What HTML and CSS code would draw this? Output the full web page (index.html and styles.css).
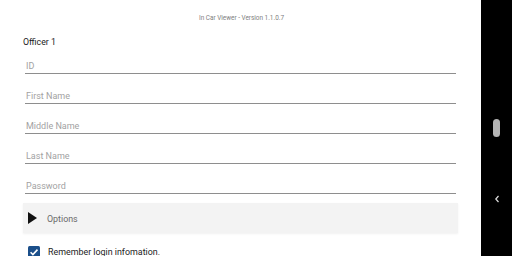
FILE: index.html
```html
<!DOCTYPE html>
<html>
<head>
<meta charset="utf-8">
<link rel="stylesheet" href="styles.css">
</head>
<body>
<div class="screen">
  <main class="app">
    <div class="version">In Car Viewer - Version 1.1.0.7</div>
    <div class="title">Officer 1</div>
    <div class="fields">
      <div class="field"><span class="label">ID</span></div>
      <div class="field"><span class="label">First Name</span></div>
      <div class="field"><span class="label">Middle Name</span></div>
      <div class="field"><span class="label">Last Name</span></div>
      <div class="field"><span class="label">Password</span></div>
    </div>
    <div class="options">
      <span class="tri"></span>
      <span class="options-label">Options</span>
    </div>
    <div class="remember">
      <span class="check">
        <svg width="12" height="12" viewBox="0 0 12 12"><path d="M2.6 6.2 L4.9 8.5 L9.5 3.6" fill="none" stroke="#fff" stroke-width="1.6"/></svg>
      </span>
      <span class="remember-label">Remember login infomation.</span>
    </div>
  </main>
  <nav class="navbar">
    <span class="pill"></span>
    <svg class="back" width="6" height="8" viewBox="0 0 6 8"><path d="M4.5 1 L1.8 4 L4.5 7" fill="none" stroke="#ddd" stroke-width="1.2"/></svg>
  </nav>
</div>
</body>
</html>
```

FILE: styles.css
```css
html, body {
  margin: 0;
  padding: 0;
  background: #fff;
}
body {
  font-family: Roboto, "Noto Sans", sans-serif;
  width: 512px;
  height: 256px;
  overflow: hidden;
}
.screen {
  display: grid;
  grid-template-columns: 481px 31px;
  height: 256px;
}
.app {
  padding: 0 23px;
  overflow: hidden;
}
.version {
  height: 24px;
  box-sizing: border-box;
  padding-top: 14px;
  line-height: 8px;
  font-size: 6.4px;
  color: #808080;
  text-align: center;
  margin-right: -2px;
}
.title {
  height: 20px;
  box-sizing: border-box;
  padding-top: 13px;
  line-height: 10px;
  font-size: 8.8px;
  color: #1a1a1a;
}
.fields {
  margin: 0 2px;
}
.field {
  height: 30px;
  box-sizing: border-box;
  border-bottom: 1px solid #8e8e8e;
  display: flex;
  align-items: flex-end;
  padding-bottom: 1px;
  padding-left: 1px;
}
.label {
  font-size: 9px;
  line-height: 11px;
  color: #a2a2a2;
}
.options {
  margin-top: 9px;
  height: 30px;
  background: #f3f3f3;
  box-shadow: 0 1px 2px rgba(0,0,0,0.06);
  display: flex;
  align-items: center;
  padding-left: 5px;
}
.tri {
  width: 0;
  height: 0;
  border-top: 6.5px solid transparent;
  border-bottom: 6.5px solid transparent;
  border-left: 9px solid #111;
}
.options-label {
  margin-left: 10px;
  padding-top: 1px;
  font-size: 8.9px;
  color: #6a6a6a;
}
.remember {
  margin-top: 12px;
  display: flex;
  align-items: center;
  padding-left: 5px;
  height: 14px;
}
.check {
  width: 12px;
  height: 12px;
  background: #1b4f8a;
  border-radius: 1.5px;
  display: flex;
}
.remember-label {
  margin-left: 8px;
  font-size: 8.9px;
  color: #222;
}
.navbar {
  background: #000;
  position: relative;
}
.pill {
  position: absolute;
  left: 12px;
  top: 119px;
  width: 7px;
  height: 18px;
  border-radius: 3.5px;
  background: #b5b5b5;
}
.back {
  position: absolute;
  left: 13px;
  top: 195px;
}
```
